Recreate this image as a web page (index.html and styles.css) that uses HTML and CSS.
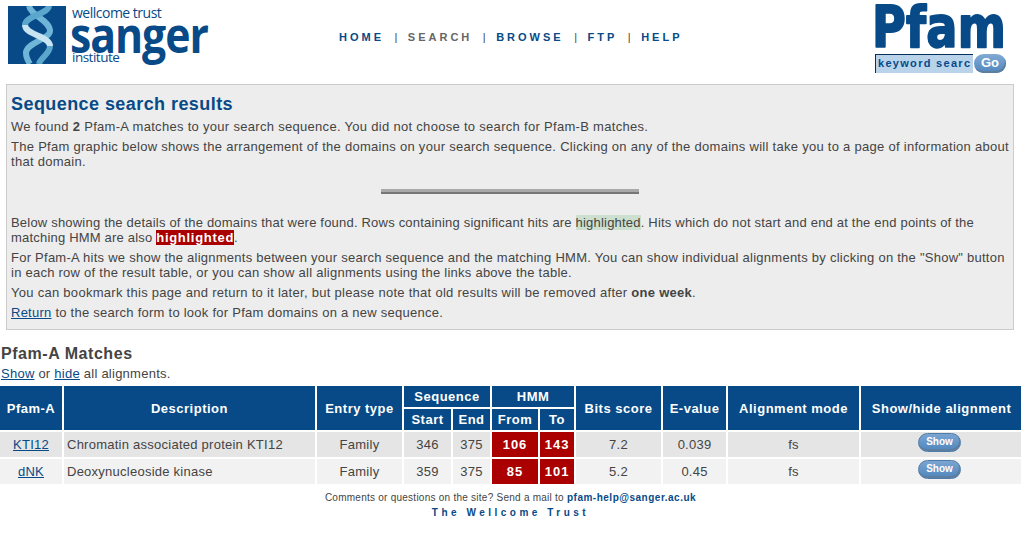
FILE: index.html
```html
<!DOCTYPE html>
<html lang="en">
<head>
<meta charset="utf-8">
<title>Pfam: Sequence search results</title>
<link rel="stylesheet" href="styles.css">
</head>
<body>
<header class="site-header">
  <a class="sanger" href="#">
    <svg class="sanger-mark" viewBox="0 0 58 58" width="58" height="58" aria-hidden="true">
      <rect width="58" height="58" fill="#074a87"/>
      <path d="M21 0 C23 10 42 14 42 25 C42 33 18 37 18 47 C18 52 20 55 22 58" fill="none" stroke="#6fb5d8" stroke-width="6"/>
      <path d="M41 0 C40 8 17 10 17 19" fill="none" stroke="#5aa6cc" stroke-width="6"/>
      <path d="M17 19 C17 29 42 30 42 40" fill="none" stroke="#c8e4f1" stroke-width="6"/>
      <path d="M42 40 C42 48 32 52 31 58" fill="none" stroke="#5aa6cc" stroke-width="6"/>
    </svg>
    <span class="sanger-words">
      <span class="sanger-top">wellcome trust</span>
      <span class="sanger-main">sanger</span>
      <span class="sanger-bottom">institute</span>
    </span>
  </a>
  <nav class="main-nav">
    <a href="#">HOME</a><span class="sep">|</span><span class="current">SEARCH</span><span class="sep">|</span><a href="#">BROWSE</a><span class="sep">|</span><a href="#">FTP</a><span class="sep">|</span><a href="#">HELP</a>
  </nav>
  <div class="pfam-box">
    <svg class="pfam-logo" viewBox="0 0 131 48" width="131" height="48" role="img" aria-label="Pfam">
      <text class="pfam-word" x="-3" y="41" textLength="134" lengthAdjust="spacingAndGlyphs">Pfam</text>
    </svg>
    <form class="search-form">
      <input class="keyword" type="text" value="keyword search">
      <button class="go" type="button">Go</button>
    </form>
  </div>
</header>

<section class="panel">
  <h1>Sequence search results</h1>
  <p class="t-wide">We found <b>2</b> Pfam-A matches to your search sequence. You did not choose to search for Pfam-B matches.</p>
  <p class="t-mid">The Pfam graphic below shows the arrangement of the domains on your search sequence. Clicking on any of the domains will take you to a page of information about that domain.</p>
  <div class="graphic"><div class="seq-bar"></div></div>
  <p class="t-tight">Below showing the details of the domains that were found. Rows containing significant hits are <span class="sig">highlighted</span>. Hits which do not start and end at the end points of the matching HMM are also <span class="full">highlighted</span>.</p>
  <p>For Pfam-A hits we show the alignments between your search sequence and the matching HMM. You can show individual alignments by clicking on the "Show" button in each row of the result table, or you can show all alignments using the links above the table.</p>
  <p class="t-mid">You can bookmark this page and return to it later, but please note that old results will be removed after <b>one week</b>.</p>
  <p><a href="#">Return</a> to the search form to look for Pfam domains on a new sequence.</p>
</section>

<section class="matches">
  <h2>Pfam-A Matches</h2>
  <p class="toggle"><a href="#">Show</a> or <a href="#">hide</a> all alignments.</p>
  <table class="results">
    <colgroup>
      <col class="c1"><col class="c2"><col class="c3"><col class="c4"><col class="c5"><col class="c6"><col class="c7"><col class="c8"><col class="c9"><col class="c10"><col class="c11">
    </colgroup>
    <thead>
      <tr>
        <th rowspan="2">Pfam-A</th>
        <th rowspan="2">Description</th>
        <th rowspan="2">Entry type</th>
        <th colspan="2">Sequence</th>
        <th colspan="2">HMM</th>
        <th rowspan="2">Bits score</th>
        <th rowspan="2">E-value</th>
        <th rowspan="2">Alignment mode</th>
        <th rowspan="2">Show/hide alignment</th>
      </tr>
      <tr><th>Start</th><th>End</th><th>From</th><th>To</th></tr>
    </thead>
    <tbody>
      <tr class="odd">
        <td><a href="#">KTI12</a></td>
        <td class="desc">Chromatin associated protein KTI12</td>
        <td>Family</td><td>346</td><td>375</td>
        <td class="hit">106</td><td class="hit">143</td>
        <td>7.2</td><td>0.039</td><td>fs</td>
        <td class="act"><button class="show" type="button">Show</button></td>
      </tr>
      <tr class="even">
        <td><a href="#">dNK</a></td>
        <td class="desc">Deoxynucleoside kinase</td>
        <td>Family</td><td>359</td><td>375</td>
        <td class="hit">85</td><td class="hit">101</td>
        <td>5.2</td><td>0.45</td><td>fs</td>
        <td class="act"><button class="show" type="button">Show</button></td>
      </tr>
    </tbody>
  </table>
</section>

<footer class="site-footer">
  <p class="contact">Comments or questions on the site? Send a mail to <a href="#">pfam-help@sanger.ac.uk</a></p>
  <p class="trust">The Wellcome Trust</p>
</footer>
</body>
</html>
```

FILE: styles.css
```css
html, body { margin: 0; padding: 0; background: #fff; }
body {
  font-family: "Liberation Sans", Arial, sans-serif;
  font-size: 13px;
  line-height: 15px;
  letter-spacing: 0.25px;
  color: #444;
  overflow: hidden;
}
a { color: #074a87; }

.site-header {
  display: flex;
  align-items: flex-start;
  height: 84px;
  padding: 6px 15px 0 8px;
  box-sizing: border-box;
}
.sanger { display: flex; gap: 6px; text-decoration: none; color: #074a87; width: 200px; flex: none; letter-spacing: 0; }
.sanger-mark { display: block; flex: none; }
.sanger-words { display: flex; flex-direction: column; height: 58px; font-family: "Open Sans", sans-serif; }
.sanger-top { font-size: 14px; font-weight: 400; line-height: 14px; height: 14px; letter-spacing: -0.5px; white-space: nowrap; }
.sanger-main { font-size: 50px; line-height: 28px; height: 31px; font-weight: 700; letter-spacing: -1.2px; transform: scaleX(0.855); transform-origin: left center; margin-left: -2px; }
.sanger-bottom { font-size: 13.5px; font-weight: 400; line-height: 13px; letter-spacing: -0.5px; }

.main-nav {
  margin-top: 25px;
  margin-left: 131px;
  font-size: 11px;
  line-height: 13px;
  font-weight: 700;
  letter-spacing: 3px;
  white-space: nowrap;
}
.main-nav a { color: #074a87; text-decoration: none; }
.main-nav .current { color: #666; }
.main-nav .sep { color: #444; font-weight: 400; margin: 0 10.5px; letter-spacing: 0; }

.pfam-box { width: 131px; margin-left: auto; }
.pfam-logo { display: block; overflow: visible; }
.pfam-word {
  font-family: "DejaVu Sans", sans-serif;
  font-weight: 700;
  font-size: 57px;
  fill: #074a87;
  stroke: #074a87;
  stroke-width: 2px;
  stroke-linejoin: round;
}
.search-form { display: flex; gap: 1px; }
.keyword {
  box-sizing: border-box;
  width: 98px;
  height: 19px;
  padding: 0 2px 2px;
  border: 0;
  border-top: 1px solid #04305a;
  border-left: 1px solid #04305a;
  background: #b9d3eb;
  color: #074a87;
  font: 700 11px "Liberation Sans", Arial, sans-serif;
  letter-spacing: 1.3px;
}
.go {
  width: 32px;
  height: 19px;
  padding: 0 0 2px;
  border: 0;
  border-radius: 10px;
  background: linear-gradient(#82aad4, #4f86bd);
  box-shadow: inset -1px -2px 0 #5d7f9f;
  color: #fff;
  font: 700 13px "Liberation Sans", Arial, sans-serif;
}

.panel {
  margin: 0 7px 0 6px;
  padding: 9px 0 2px 4px;
  height: 246px;
  box-sizing: border-box;
  background: #ededed;
  border: 1px solid #ccc;
}
.panel h1 {
  margin: 0 0 4px;
  font-size: 18px;
  line-height: 21px;
  letter-spacing: 0.43px;
  color: #074a87;
}
.panel p { margin: 0 0 5px; }
.panel .t-wide { letter-spacing: 0.3px; }
.panel .t-mid { letter-spacing: 0.28px; }
.panel .t-tight { letter-spacing: 0.2px; }
.graphic { height: 36px; padding-top: 15px; box-sizing: border-box; display: flex; justify-content: center; margin: 0 4px 5px 0; }
.seq-bar { width: 258px; height: 5px; background: linear-gradient(#a9a9a9 60%, #777 60%); }
.sig { background: #cddfce; }
.full { background: #a00; color: #fff; font-weight: 700; letter-spacing: 0.7px; }

.matches { margin-top: 14px; padding-left: 1px; }
.matches h2 { margin: 0; font-size: 16px; line-height: 19px; color: #444; letter-spacing: 0.55px; }
.toggle { margin: 3px 0 5px; }

.results {
  margin-left: -3px;
  border-collapse: separate;
  border-spacing: 2px 2px;
  margin-top: -2px;
  table-layout: fixed;
  width: 1026px;
}
.c1 { width: 62px; } .c2 { width: 251px; } .c3 { width: 85px; } .c4 { width: 47px; }
.c5 { width: 37px; } .c6 { width: 46px; } .c7 { width: 34px; } .c8 { width: 85px; }
.c9 { width: 63px; } .c10 { width: 131px; } .c11 { width: 161px; }
.results th {
  height: 21px;
  padding: 0;
  background: #074a87;
  color: #fff;
  font-size: 13px;
  letter-spacing: 0.5px;
  font-weight: 700;
  text-align: center;
}
.results td { height: 25px; padding: 0; text-align: center; }
.odd td { background: #e5e5e5; }
.even td { background: #f2f2f2; }
.results td.desc { text-align: left; padding-left: 3px; }
.results td.hit { background: #a00; color: #fff; font-weight: 700; letter-spacing: 1px; }
.results td.act { vertical-align: top; }
.show {
  display: block;
  margin: 1px auto 0 57px;
  width: 43px;
  height: 19px;
  padding: 0 0 2px;
  border: 1px solid #4f7ba8;
  border-radius: 10px;
  background: linear-gradient(#7ba5d1, #4f86bd);
  box-shadow: inset -1px -2px 0 #5d7f9f;
  color: #fff;
  font: 700 10px "Liberation Sans", Arial, sans-serif;
}

.site-footer { text-align: center; font-size: 10px; line-height: 13px; padding-top: 5px; }
.site-footer p { margin: 0 0 2px; }
.contact a { font-weight: 700; text-decoration: none; letter-spacing: 0.5px; }
.trust { color: #074a87; font-weight: 700; letter-spacing: 3.5px; }
```
